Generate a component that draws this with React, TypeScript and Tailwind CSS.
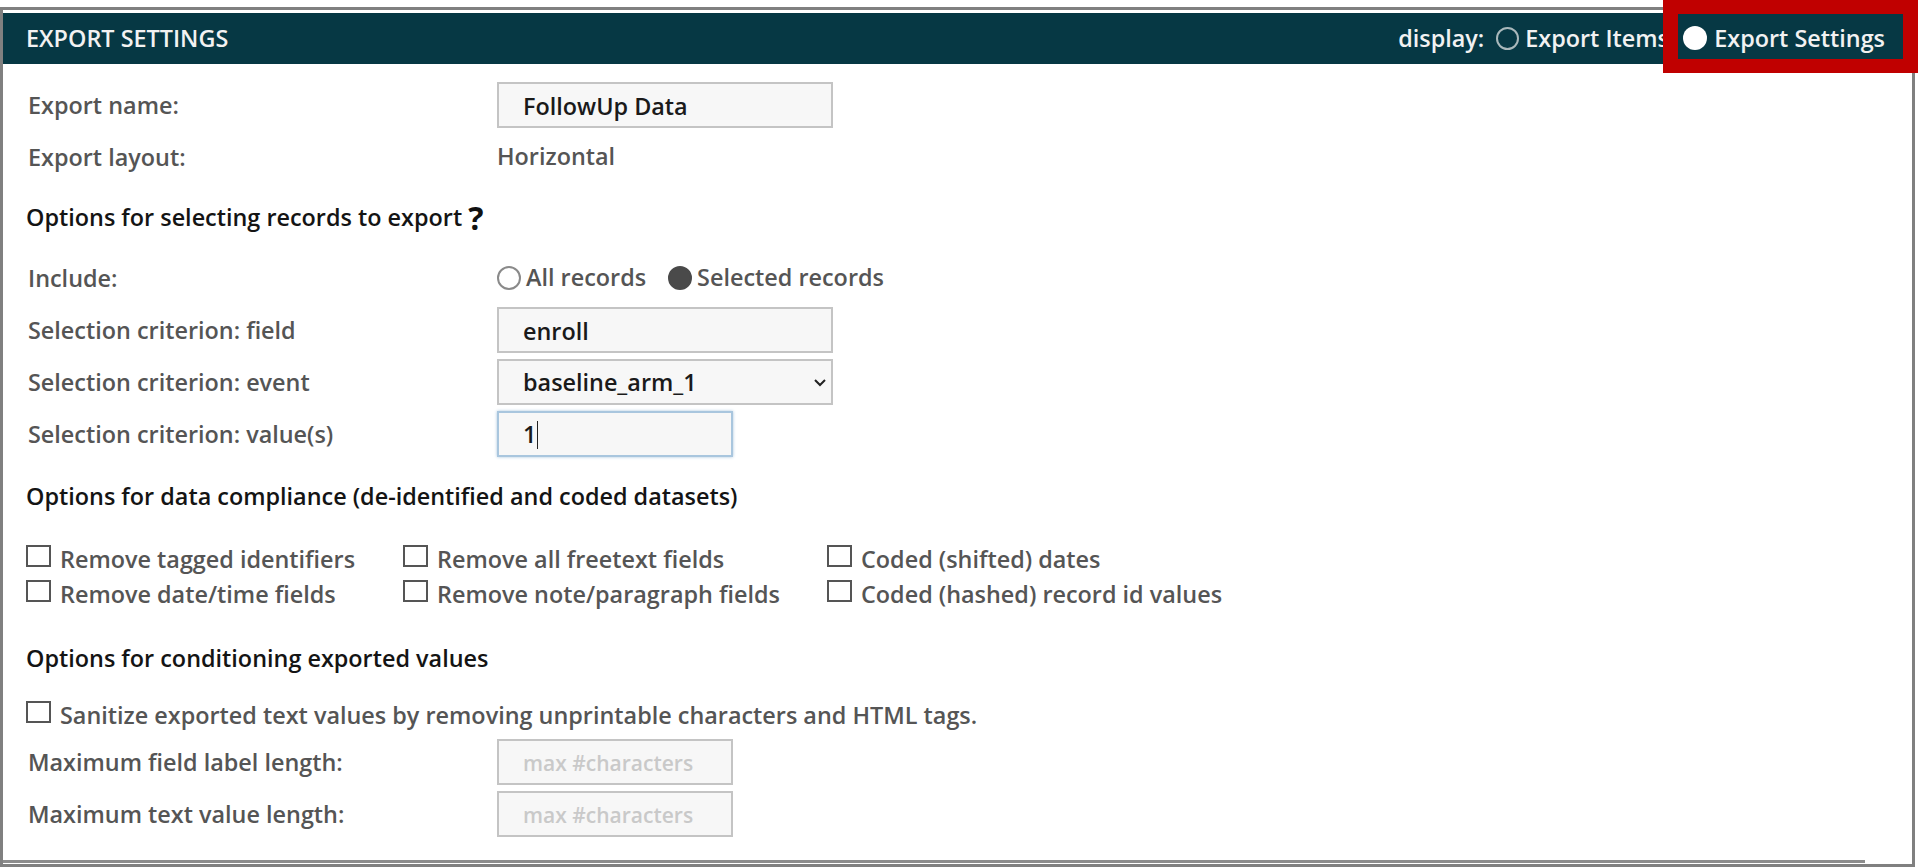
import React from 'react';

const fieldClass = 'h-[46px] border-2 bg-[#f7f7f7] px-[24px] pt-[2px] font-semibold outline-none';
const labelClass = 'whitespace-nowrap text-[23.4px] font-semibold text-[#555555]';

const Row: React.FC<{ label: string; children: React.ReactNode; className?: string }> = ({
  label,
  children,
  className = '',
}) => (
  <div className={`flex h-[46px] items-center ${className}`}>
    <div className={`w-[494px] pl-[25px] pt-[1px] ${labelClass}`}>{label}</div>
    {children}
  </div>
);

const Heading: React.FC<{ children: React.ReactNode; className?: string }> = ({ children, className = '' }) => (
  <div className={`flex h-[30px] items-center pl-[23px] text-[23.4px] font-semibold text-[#141414] ${className}`}>
    {children}
  </div>
);

const Radio: React.FC<{ checked?: boolean; label: string; className?: string }> = ({
  checked,
  label,
  className = '',
}) => (
  <div className={`flex items-center gap-[5px] ${className}`}>
    <span
      className={`h-[24px] w-[24px] rounded-full border-2 ${
        checked ? 'border-[#4a4a4a] bg-[#4a4a4a]' : 'border-[#8a8a8a] bg-white'
      }`}
    />
    <span className={labelClass}>{label}</span>
  </div>
);

const Check: React.FC<{ label: string }> = ({ label }) => (
  <div className="flex h-[30px] items-center gap-[9px]">
    <span className="mb-2 h-[22px] w-[25px] shrink-0 border-2 border-[#555555] bg-white" />
    <span className={labelClass}>{label}</span>
  </div>
);

export default function App() {
  return (
    <div className="relative h-[867px] w-[1918px] overflow-hidden bg-white font-['Open_Sans',sans-serif]">
      <div className="mt-[7px] h-[860px] w-[1915px] border-[3px] border-[#808080]">
        <div className="mt-[3px] flex h-[51px] items-center justify-between bg-[#063844] pl-[23px] pr-[27px] text-[23.4px] font-semibold text-[#f2f2f2]">
          <div>EXPORT SETTINGS</div>
          <div className="flex items-center">
            <span className="mr-[12px]">display:</span>
            <span className="h-[23px] w-[23px] rounded-full border-2 border-[#a9b8bb]" />
            <span className="ml-[6px] mr-[18px] w-[140px] whitespace-nowrap">Export Items</span>
            <span className="h-[24px] w-[24px] rounded-full bg-white" />
            <span className="ml-[7px]">Export Settings</span>
          </div>
        </div>

        <Row label="Export name:" className="mt-[18px]">
          <input readOnly value="FollowUp Data" className={`${fieldClass} w-[336px] border-[#c4c4c4] text-[23.4px] text-[#1a1a1a]`} />
        </Row>
        <Row label="Export layout:" className="mt-[6px]">
          <span className={labelClass}>Horizontal</span>
        </Row>

        <Heading className="mt-[23px]">
          Options for selecting records to export
          <span className="ml-[6px] text-[32px] leading-none font-bold text-[#111111]">?</span>
        </Heading>

        <Row label="Include:" className="mt-[22px]">
          <Radio label="All records" />
          <Radio checked label="Selected records" className="ml-[22px]" />
        </Row>
        <Row label="Selection criterion: field" className="mt-[6px]">
          <input readOnly value="enroll" className={`${fieldClass} w-[336px] border-[#c4c4c4] text-[23.4px] text-[#1a1a1a]`} />
        </Row>
        <Row label="Selection criterion: event" className="mt-[6px]">
          <div className="relative w-[336px]">
            <select
              className={`${fieldClass} w-full appearance-none border-[#c4c4c4] text-[23.4px] text-[#1a1a1a]`}
              defaultValue="baseline_arm_1"
            >
              <option>baseline_arm_1</option>
            </select>
            <svg className="absolute right-[7px] top-[19px] h-[9px] w-[12px]" viewBox="0 0 12 9" fill="none">
              <path d="M1 2l5 5 5-5" stroke="#222222" strokeWidth="2" />
            </svg>
          </div>
        </Row>
        <Row label="Selection criterion: value(s)" className="mt-[6px]">
          <div
            className={`${fieldClass} flex w-[236px] items-center border-[#a9c6de] text-[23.4px] text-[#1a1a1a] shadow-[0_0_3px_#a9c6de]`}
          >
            1<span className="ml-[1px] h-[28px] w-[1px] bg-[#222222]" />
          </div>
        </Row>

        <Heading className="mt-[25px]">Options for data compliance (de-identified and coded datasets)</Heading>

        <div className="mt-[33px] grid grid-cols-[377px_424px_1fr] gap-y-[5px] pl-[23px]">
          <Check label="Remove tagged identifiers" />
          <Check label="Remove all freetext fields" />
          <Check label="Coded (shifted) dates" />
          <Check label="Remove date/time fields" />
          <Check label="Remove note/paragraph fields" />
          <Check label="Coded (hashed) record id values" />
        </div>

        <Heading className="mt-[34px]">Options for conditioning exported values</Heading>

        <div className="mt-[27px] pl-[23px]">
          <Check label="Sanitize exported text values by removing unprintable characters and HTML tags." />
        </div>

        <Row label="Maximum field label length:" className="mt-[8px]">
          <input
            readOnly
            placeholder="max #characters"
            className={`${fieldClass} w-[236px] border-[#c4c4c4] text-[21px] placeholder:text-[#c9c9c9]`}
          />
        </Row>
        <Row label="Maximum text value length:" className="mt-[6px]">
          <input
            readOnly
            placeholder="max #characters"
            className={`${fieldClass} w-[236px] border-[#c4c4c4] text-[21px] placeholder:text-[#c9c9c9]`}
          />
        </Row>

        <div className="mt-[23px] h-[3px] w-[1862px] bg-[#8c8c8c]" />
      </div>

      {/* red annotation box over the display toggle */}
      <div className="absolute left-[1663px] top-0 h-[73px] w-[255px] border-x-[15px] border-b-[14px] border-t-[14px] border-[#c00000]" />
    </div>
  );
}
